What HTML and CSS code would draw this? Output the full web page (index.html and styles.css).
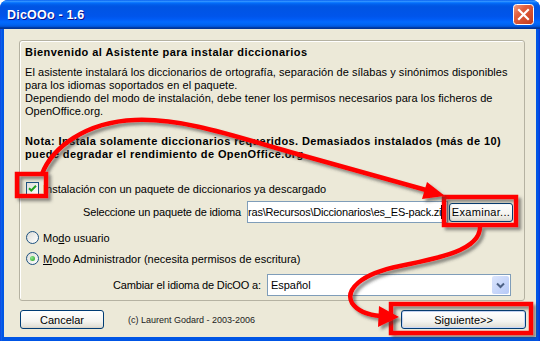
FILE: index.html
```html
<!DOCTYPE html>
<html lang="es">
<head>
  <meta charset="UTF-8" />
  <title>DicOOo - 1.6</title>
  <link rel="stylesheet" href="styles.css">
</head>
<body>

  <div class="window">
    <div class="titlebar">
      <span class="title">DicOOo - 1.6</span>
      <span class="close-btn">
        <svg width="21" height="21" viewBox="0 0 21 21">
          <defs>
            <linearGradient id="closeGrad" x1="0" y1="0" x2="1" y2="1">
              <stop offset="0" stop-color="#f2a189"/>
              <stop offset="0.35" stop-color="#e1603f"/>
              <stop offset="1" stop-color="#c2391a"/>
            </linearGradient>
          </defs>
          <rect x="0.5" y="0.5" width="20" height="20" rx="3" fill="url(#closeGrad)" stroke="#fff"/>
          <path d="M6 6 L15 15 M15 6 L6 15" stroke="#fff" stroke-width="2.2" stroke-linecap="square"/>
        </svg>
      </span>
    </div>

    <div class="client">
      <div class="group">
        <div class="heading">Bienvenido al Asistente para instalar diccionarios</div>
        <p class="intro">El asistente instalará los diccionarios de ortografía, separación de sílabas y sinónimos disponibles<br>para los idiomas soportados en el paquete.<br>Dependiendo del modo de instalación, debe tener los permisos necesarios para los ficheros de<br>OpenOffice.org.</p>
        <p class="note">Nota: Instala solamente diccionarios requeridos. Demasiados instalados (más de 10)<br>puede degradar el rendimiento de OpenOffice.org</p>

        <div class="check-row">
          <svg class="checkbox" width="13" height="13" viewBox="0 0 13 13">
            <defs>
              <linearGradient id="boxGrad" x1="0" y1="0" x2="1" y2="1">
                <stop offset="0" stop-color="#dcdcd7"/>
                <stop offset="1" stop-color="#ffffff"/>
              </linearGradient>
            </defs>
            <rect x="0.5" y="0.5" width="12" height="12" fill="url(#boxGrad)" stroke="#1c5180"/>
            <path d="M3 6.2 L5.3 8.5 L10 3.8" fill="none" stroke="#21a121" stroke-width="2"/>
          </svg>
          <span>Instalación con un paquete de diccionarios ya descargado</span>
        </div>

        <div class="file-row">
          <span class="field-label">Seleccione un paquete de idioma</span>
          <span class="path-input"><span class="path-text">ras\Recursos\Diccionarios\es_ES-pack.zi</span><span class="caret"></span></span>
          <span class="btn btn-browse">Examinar...</span>
        </div>

        <div class="radio-row">
          <span class="radio"></span>
          <span>Mo<u>d</u>o usuario</span>
        </div>
        <div class="radio-row">
          <span class="radio checked"></span>
          <span><u>M</u>odo Administrador (necesita permisos de escritura)</span>
        </div>

        <div class="lang-row">
          <span class="field-label">Cambiar el idioma de DicOO a:</span>
          <span class="select">
            <span class="select-value">Español</span>
            <span class="select-arrow">
              <svg width="9" height="7" viewBox="0 0 9 7">
                <path d="M1 1.5 L4.5 5 L8 1.5" fill="none" stroke="#4d6185" stroke-width="2"/>
              </svg>
            </span>
          </span>
        </div>
      </div>

      <div class="footer">
        <span class="btn btn-cancel">Cancelar</span>
        <span class="copyright">(c) Laurent Godard - 2003-2006</span>
        <span class="btn btn-next">Siguiente&gt;&gt;</span>
      </div>
    </div>

    <!-- red callouts drawn over the dialog -->
    <svg class="annotations" width="540" height="341" viewBox="0 0 540 341">
      <defs>
        <filter id="shadow" x="-20%" y="-20%" width="140%" height="140%">
          <feDropShadow dx="3" dy="3" stdDeviation="1.6" flood-color="#3a3a3a" flood-opacity="0.55"/>
        </filter>
      </defs>
      <g filter="url(#shadow)" fill="none" stroke="#ff0000" stroke-width="4.5">
        <rect x="17" y="174" width="29" height="22"/>
        <rect x="444" y="197" width="72" height="28"/>
        <rect x="391" y="304" width="140" height="29"/>
        <path d="M42 174 C52 148 85 122 135 120 C185 118 240 138 290 152 L426 190"/>
        <path d="M480 227 C480 250 440 258 400 266 C360 274 345 290 352 303 C358 312 368 315 381 316"/>
      </g>
      <g filter="url(#shadow)" fill="#ff0000">
        <polygon points="445,196 427,182 422,199"/>
        <polygon points="399,317 379,306 378,327"/>
      </g>
    </svg>
  </div>

</body>
</html>
```

FILE: styles.css
```css
body {
  margin: 0;
  padding: 0;
  background: #ffffff;
  font-family: "Liberation Sans", Arial, sans-serif;
  font-size: 11px;
  color: #000;
}

.window {
  position: relative;
  width: 540px;
  height: 341px;
  box-sizing: border-box;
  background: linear-gradient(to right, #0831d9 0, #166aee 1px, #0055e5 2px, #0055e5 538px, #0831d9 540px);
  border-radius: 8px 8px 0 0;
  overflow: hidden;
  padding-bottom: 4px;
}

/* Title bar */
.titlebar {
  height: 29px;
  display: flex;
  align-items: center;
  justify-content: space-between;
  padding: 0 6px 0 7px;
  background: linear-gradient(to bottom, #0058ee 0%, #3593ff 4%, #288eff 6%, #127dff 8%, #036ffc 10%, #0262ee 14%, #0057e5 20%, #0054e3 24%, #0055eb 56%, #005bf5 66%, #026afe 76%, #0062ef 86%, #0052d6 92%, #0040ab 94%, #003092 100%);
}
.title {
  color: #fff;
  font-weight: bold;
  font-size: 12.5px;
  letter-spacing: 0.2px;
  text-shadow: 1px 1px #0f1089;
}
.close-btn {
  display: flex;
  width: 21px;
  height: 21px;
}

/* Client area */
.client {
  margin: 0 4px;
  height: 308px;
  box-sizing: border-box;
  background: #ece9d8;
  padding: 11px 11px 0 15px;
}

.group {
  border: 1px solid #b5b2a2;
  border-radius: 3px;
  box-shadow: inset 1px 1px #fff;
  padding: 5px 6px 3px 5px;
  height: 261px;
  box-sizing: border-box;
  white-space: nowrap;
}
.heading {
  font-weight: bold;
  line-height: 13px;
  letter-spacing: 0.45px;
}
.intro {
  margin: 7px 0 0;
  line-height: 13px;
  letter-spacing: 0.05px;
}
.note {
  margin: 17px 0 0;
  line-height: 13px;
  font-weight: bold;
  letter-spacing: 0.4px;
}
.field-label {
  letter-spacing: -0.15px;
}

.check-row {
  display: flex;
  align-items: center;
  gap: 4px;
  height: 13px;
  margin-top: 21px;
  padding-left: 1px;
}

.file-row {
  display: flex;
  align-items: center;
  height: 22px;
  margin-top: 6px;
  padding-left: 58px;
}
.file-row .field-label {
  margin-right: 6px;
}
.path-input {
  display: flex;
  align-items: center;
  width: 201px;
  height: 22px;
  flex: none;
  box-sizing: border-box;
  background: #fff;
  border: 1px solid #7f9db9;
  overflow: hidden;
}
.path-text {
  flex: none;
  letter-spacing: -0.2px;
}
.caret {
  width: 1px;
  height: 14px;
  background: #000;
  flex: none;
}

.radio-row {
  display: flex;
  align-items: center;
  gap: 4px;
  height: 13px;
  margin-top: 8px;
  padding-left: 1px;
}
.radio {
  width: 13px;
  height: 13px;
  box-sizing: border-box;
  border-radius: 50%;
  border: 1px solid #1c5180;
  background: linear-gradient(135deg, #dcdcd7, #ffffff);
  position: relative;
  flex: none;
}
.radio.checked::after {
  content: "";
  position: absolute;
  left: 3px;
  top: 3px;
  width: 5px;
  height: 5px;
  border-radius: 50%;
  background: radial-gradient(circle at 35% 35%, #8ee68e, #21a121);
}

.lang-row {
  display: flex;
  align-items: center;
  height: 22px;
  margin-top: 9px;
  padding-left: 88px;
}
.lang-row .field-label {
  margin-right: 6px;
}
.select {
  display: flex;
  align-items: center;
  justify-content: space-between;
  width: 244px;
  height: 22px;
  flex: none;
  box-sizing: border-box;
  background: #fff;
  border: 1px solid #7f9db9;
  padding: 1px;
}
.select-value {
  padding-left: 2px;
}
.select-arrow {
  display: flex;
  align-items: center;
  justify-content: center;
  width: 17px;
  height: 18px;
  border-radius: 2px;
  background: linear-gradient(135deg, #dbe5fd, #b6c9f7);
}

/* Buttons */
.btn {
  display: flex;
  align-items: center;
  justify-content: center;
  flex: none;
  box-sizing: border-box;
  border: 1px solid #003c74;
  border-radius: 3px;
  background: linear-gradient(to bottom, #ffffff 0%, #f4f4f0 60%, #e3e2da 90%, #d6d0c5 100%);
}
.btn-browse {
  width: 64px;
  height: 19px;
  margin-left: 1px;
  letter-spacing: 0.3px;
}

.footer {
  display: flex;
  align-items: center;
  margin-top: 9px;
  padding-left: 1px;
}
.btn-cancel {
  width: 84px;
  height: 19px;
}
.copyright {
  font-size: 9px;
  margin-left: 24px;
  color: #222;
}
.btn-next {
  width: 125px;
  height: 19px;
  margin-left: auto;
  margin-right: -1px;
  box-shadow: inset 0 0 0 1px #c9d8f8;
}

/* Callout overlay */
.annotations {
  position: absolute;
  top: 0;
  left: 0;
  pointer-events: none;
}
```
